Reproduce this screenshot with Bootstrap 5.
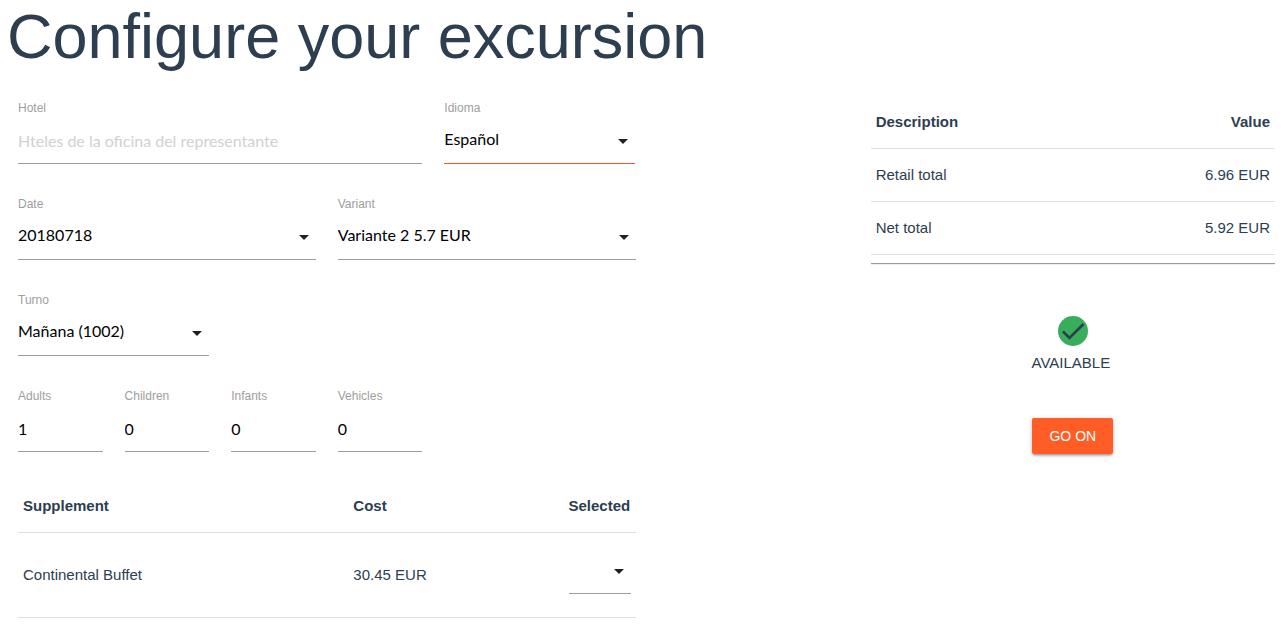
<!DOCTYPE html>
<html lang="en">
<head>
<meta charset="utf-8">
<meta name="viewport" content="width=device-width, initial-scale=1">
<title>Configure your excursion</title>
<link href="https://cdn.jsdelivr.net/npm/bootstrap@5.3.0/dist/css/bootstrap.min.css" rel="stylesheet">
<style>
  body {
    font-family: "Liberation Sans", Arial, sans-serif;
    font-size: 15px;
    line-height: 22px;
    color: #2c3e50;
  }
  .page { padding: 0 13px 0 18px; }
  .page .row { --bs-gutter-x: 22px; }
  .page-title {
    margin: 2px 0 13px -11px;
    font-size: 63px;
    line-height: 69px;
    font-weight: 400;
  }
  .field { padding-top: 15px; margin-bottom: 16px; }
  .field label {
    display: block;
    font-size: 12px;
    line-height: 18px;
    color: #9e9e9e;
  }
  .line-input {
    height: 47px;
    padding: 0;
    border: 0;
    border-bottom: 1px solid #9e9e9e;
    border-radius: 0;
    background-color: transparent;
    font-family: Lato, "Noto Sans", sans-serif;
    font-size: 16px;
    color: #000;
  }
  .line-input::placeholder { color: #d1d1d1; }
  .line-input:focus { border-color: #ff5722; box-shadow: none; background-color: transparent; }
  select.line-input {
    padding: 0 24px 2px 0;
    background-image: url("data:image/svg+xml,%3Csvg xmlns='http://www.w3.org/2000/svg' viewBox='0 0 10 5'%3E%3Cpath d='M0 0h10L5 5z' fill='%23212121'/%3E%3C/svg%3E");
    background-size: 10px 5px;
    background-position: right 7px top 22px;
  }
  .line-input.is-current { border-color: #ff5722; }
  .grid-table { --bs-table-color: #2c3e50; margin: 0; }
  .grid-table > :not(caption) > * > * {
    padding: 15px 5px;
    border-bottom: 1px solid #e0e0e0;
    vertical-align: middle;
  }
  .supplements { margin-top: 12px; }
  .supplements .col-name { width: 53.5%; }
  .supplements .col-pick { width: 72px; }
  .supplements select.line-input {
    height: 46px;
    margin-bottom: 8px;
    background-position: right 7px top 21px;
  }
  .totals { margin-top: 12px; }
  .totals-rule {
    margin: 8px 0 51px;
    border-top: 1px solid #9a9a9a;
    border-bottom: 1px solid #eee;
    opacity: 1;
  }
  .status { margin-top: 6px; padding-right: 4px; }
  .btn-go {
    height: 36px;
    margin-top: 44px;
    padding: 0 17px;
    border: 0;
    border-radius: 2px;
    background: #ff5c26;
    color: #fff;
    font-size: 14px;
    line-height: 36px;
    box-shadow: 0 2px 2px rgba(0,0,0,.14), 0 3px 1px -2px rgba(0,0,0,.12), 0 1px 5px rgba(0,0,0,.2);
  }
  .btn-go:hover { background: #ff7043; color: #fff; }
</style>
</head>
<body>
<main class="container-fluid page">
  <h1 class="page-title">Configure your excursion</h1>
  <div class="row">
    <div class="col-6">
      <form class="row">
        <div class="col-8 field">
          <label for="hotel">Hotel</label>
          <input id="hotel" type="text" class="form-control line-input" placeholder="Hteles de la oficina del representante">
        </div>
        <div class="col-4 field">
          <label for="language">Idioma</label>
          <select id="language" class="form-select line-input is-current"><option>Español</option></select>
        </div>
        <div class="col-6 field">
          <label for="date">Date</label>
          <select id="date" class="form-select line-input"><option>20180718</option></select>
        </div>
        <div class="col-6 field">
          <label for="variant">Variant</label>
          <select id="variant" class="form-select line-input"><option>Variante 2 5.7 EUR</option></select>
        </div>
        <div class="col-4 field">
          <label for="shift">Turno</label>
          <select id="shift" class="form-select line-input"><option>Mañana (1002)</option></select>
        </div>
        <div class="w-100"></div>
        <div class="col-2 field">
          <label for="adults">Adults</label>
          <input id="adults" type="number" class="form-control line-input" value="1">
        </div>
        <div class="col-2 field">
          <label for="children">Children</label>
          <input id="children" type="number" class="form-control line-input" value="0">
        </div>
        <div class="col-2 field">
          <label for="infants">Infants</label>
          <input id="infants" type="number" class="form-control line-input" value="0">
        </div>
        <div class="col-2 field">
          <label for="vehicles">Vehicles</label>
          <input id="vehicles" type="number" class="form-control line-input" value="0">
        </div>
        <div class="col-12">
          <table class="table grid-table supplements">
            <thead>
              <tr><th class="col-name">Supplement</th><th>Cost</th><th class="col-pick">Selected</th></tr>
            </thead>
            <tbody>
              <tr>
                <td>Continental Buffet</td>
                <td>30.45 EUR</td>
                <td><select class="form-select line-input" aria-label="Continental Buffet selected"><option></option></select></td>
              </tr>
            </tbody>
          </table>
        </div>
      </form>
    </div>
    <aside class="col-4 offset-2 text-center">
      <table class="table grid-table totals text-start">
        <thead>
          <tr><th>Description</th><th class="text-end">Value</th></tr>
        </thead>
        <tbody>
          <tr><td>Retail total</td><td class="text-end">6.96 EUR</td></tr>
          <tr><td>Net total</td><td class="text-end">5.92 EUR</td></tr>
        </tbody>
      </table>
      <hr class="totals-rule">
      <svg class="d-block mx-auto" width="30" height="30" viewBox="0 0 30 30" aria-hidden="true">
        <circle cx="15" cy="15" r="15" fill="#38ad5a"/>
        <path d="M5 15.500l6.500 6.500L25.500 8" fill="none" stroke="#2c3e50" stroke-width="2.600"/>
      </svg>
      <div class="status">AVAILABLE</div>
      <button type="button" class="btn btn-go">GO ON</button>
    </aside>
  </div>
</main>
<script src="https://cdn.jsdelivr.net/npm/bootstrap@5.3.0/dist/js/bootstrap.bundle.min.js"></script>
</body>
</html>
